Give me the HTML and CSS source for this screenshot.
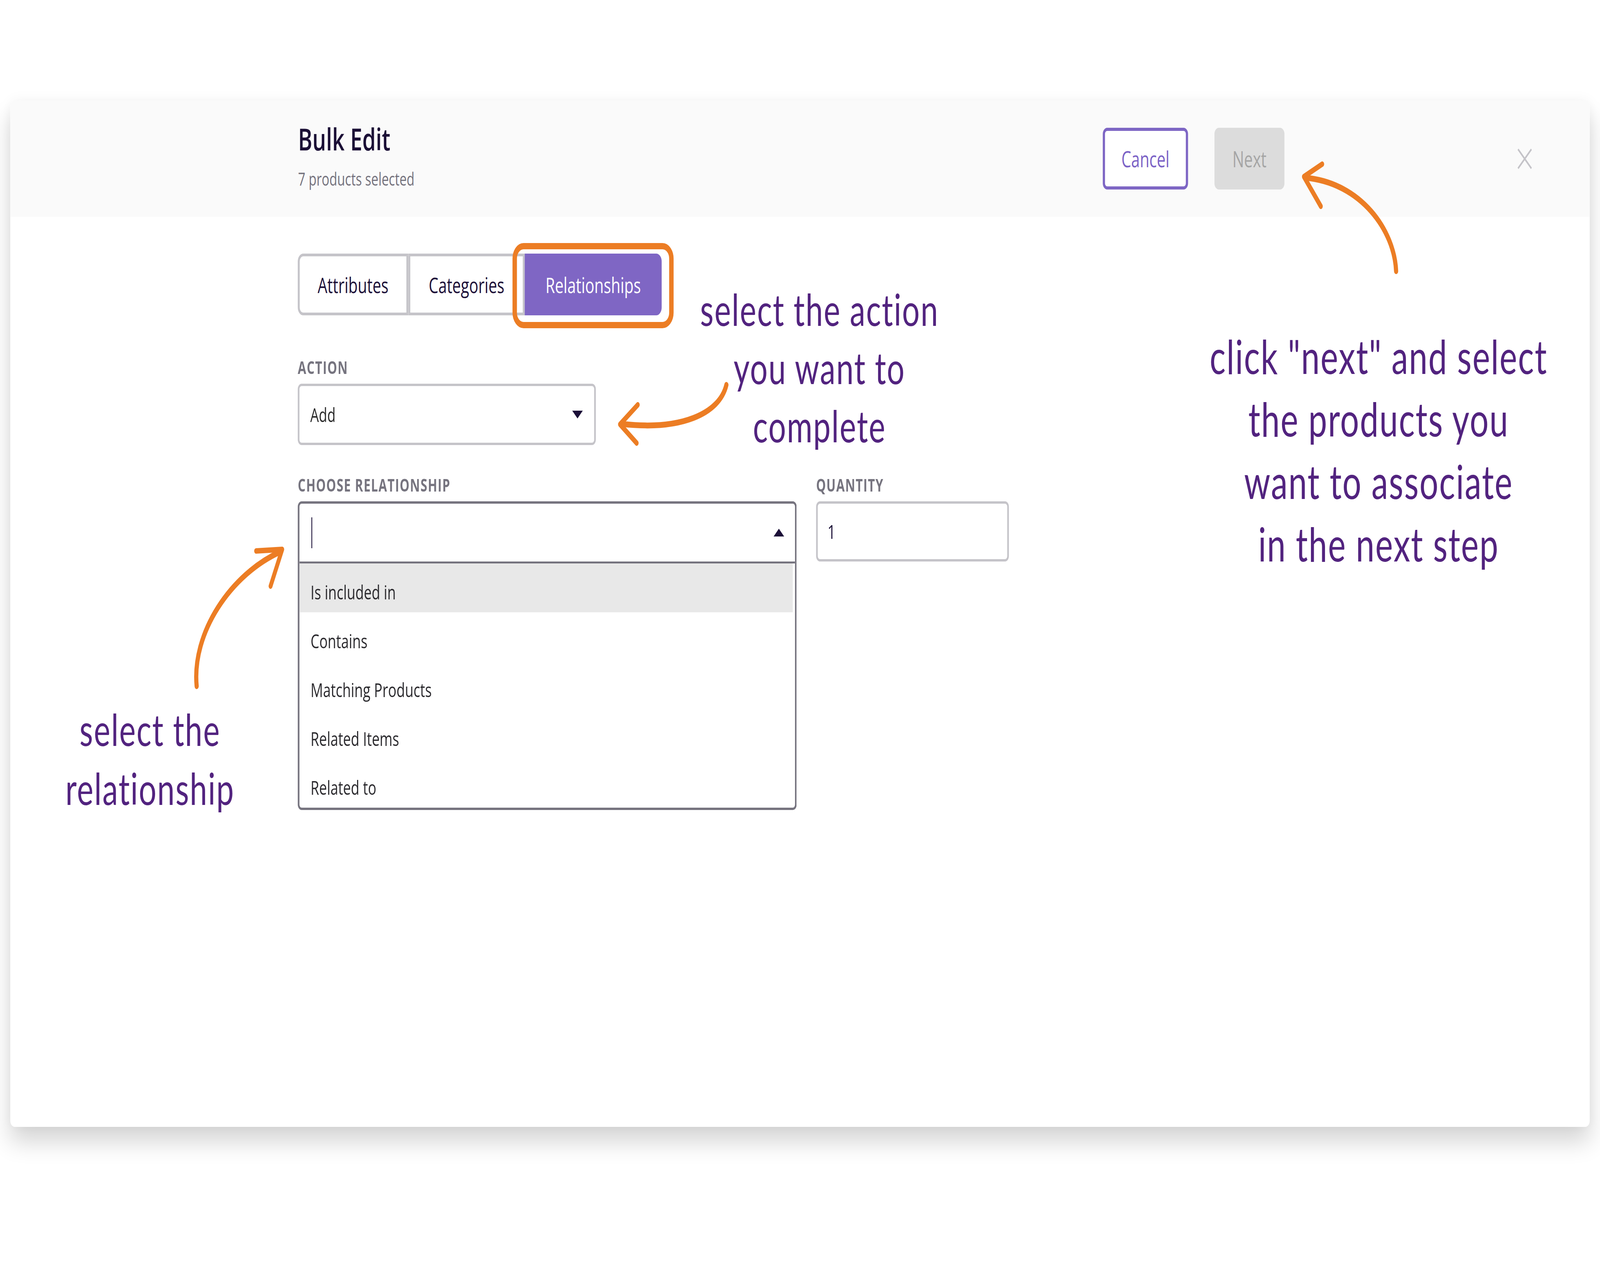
FILE: index.html
```html
<!doctype html>
<html>
    <head>
        <title>Bulk Edit</title>
        <link rel="stylesheet" href="styles.css">
    </head>
    <body>
        <div class="stage">
            <div class="page">
                <div class="card">
                    <div class="card-header">
                        <div class="heading">
                            <h1 class="title">Bulk Edit</h1>
                            <div class="subtitle">7 products selected</div>
                        </div>
                        <div class="actions">
                            <button class="btn btn-outline">Cancel</button>
                            <button class="btn btn-disabled">Next</button>
                        </div>
                        <button class="close" aria-label="Close">
                            <svg width="54" height="55" viewBox="0 0 54 55">
                                <path d="M3 3 L51 52 M51 3 L3 52" stroke="#c4c3c8" stroke-width="5" fill="none"/>
                            </svg>
                        </button>
                    </div>

                    <div class="card-body">
                        <div class="tabs">
                            <div class="tab">Attributes</div>
                            <div class="tab">Categories</div>
                            <div class="tab active">Relationships</div>
                        </div>

                        <div class="field field-action">
                            <div class="label">Action</div>
                            <div class="select">
                                <span>Add</span>
                                <span class="caret-down"></span>
                            </div>
                        </div>

                        <div class="field-row">
                            <div class="field field-relationship">
                                <div class="label">Choose Relationship</div>
                                <div class="combo">
                                    <div class="combo-input">
                                        <span class="cursor"></span>
                                        <span class="caret-up"></span>
                                    </div>
                                    <ul class="options">
                                        <li class="option hover">Is included in</li>
                                        <li class="option">Contains</li>
                                        <li class="option">Matching Products</li>
                                        <li class="option">Related Items</li>
                                        <li class="option">Related to</li>
                                    </ul>
                                </div>
                            </div>
                            <div class="field field-quantity">
                                <div class="label">Quantity</div>
                                <div class="input">1</div>
                            </div>
                        </div>
                    </div>
                </div>

                <!-- annotations -->
                <div class="note note-action">select the action<br>you want to<br>complete</div>
                <div class="note note-next">click "next" and select<br>the products you<br>want to associate<br>in the next step</div>
                <div class="note note-relationship">select the<br>relationship</div>

                <svg class="arrows" width="5760" height="3240" viewBox="0 0 5760 3240">
                    <g fill="none" stroke="#ec7d24" stroke-linecap="round" stroke-linejoin="round">
                        <path d="M5026 694 C5020 590 4900 468 4700 455" stroke-width="15"/>
                        <path d="M4760 420 L4694 452 L4755 528" stroke-width="14"/>

                        <path d="M2615 985 C2590 1060 2450 1102 2240 1085" stroke-width="15"/>
                        <path d="M2296 1036 L2232 1086 L2292 1134" stroke-width="14"/>

                        <path d="M708 1756 C690 1620 830 1470 1010 1412" stroke-width="15"/>
                        <path d="M922 1410 L1016 1406 L974 1500" stroke-width="14"/>
                    </g>
                </svg>
            </div>
        </div>
        <script src="script.js"></script>
    </body>
</html>
```

FILE: styles.css
```css
html, body {
    overflow: hidden;
}

body {
    margin: 0;
    padding: 0;
    background-color: #ffffff;
    font-family: 'Open Sans', 'Noto Sans', Arial, sans-serif;
}

.stage {
    width: 100vw;
    height: 100vh;
    overflow: hidden;
}

.page {
    position: relative;
    width: 5760px;
    height: 3240px;
    padding: 257px 37px 0;
    box-sizing: border-box;
    transform-origin: 0 0;
}

/* Modal card */
.card {
    height: 2627px;
    background-color: #ffffff;
    border-radius: 16px;
    overflow: hidden;
    box-shadow: 0 40px 70px rgba(0, 0, 0, 0.16), 0 0 40px rgba(0, 0, 0, 0.05);
}

.card-header {
    display: flex;
    align-items: center;
    height: 298px;
    padding: 0 207px 0 1036px;
    box-sizing: border-box;
    background-color: #fafafa;
}

.heading {
    flex: 1;
    align-self: flex-start;
    padding-top: 51px;
}

.title {
    margin: 0;
    font-size: 78px;
    line-height: 94px;
    font-weight: 600;
    color: #1b0f36;
}

.subtitle {
    margin-top: 25px;
    font-size: 46px;
    line-height: 60px;
    color: #74727d;
}

.actions {
    display: flex;
    gap: 95px;
}

.btn {
    height: 158px;
    box-sizing: border-box;
    border-radius: 16px;
    font-family: inherit;
    font-size: 56px;
    padding: 0;
}

.btn-outline {
    width: 307px;
    border: 8px solid #7e66c4;
    background-color: #ffffff;
    color: #7b62c6;
}

.btn-disabled {
    width: 252px;
    border: none;
    background-color: #dcdcdc;
    color: #a5a5a5;
}

.close {
    margin-left: 838px;
    padding: 0;
    border: none;
    background: none;
    display: flex;
}

/* Body */
.card-body {
    padding: 94px 0 0 1035px;
}

.tabs {
    display: flex;
    height: 158px;
}

.tab {
    position: relative;
    display: flex;
    align-items: center;
    justify-content: center;
    box-sizing: border-box;
    border: 7px solid #c5c4c9;
    background-color: #ffffff;
    font-size: 55px;
    color: #1c1038;
}

.tab:nth-child(1) {
    width: 398px;
    border-radius: 20px 0 0 20px;
}

.tab:nth-child(2) {
    width: 419px;
}

.tab.active {
    width: 493px;
    border-color: #7f66c4;
    background-color: #7f66c4;
    color: #ffffff;
    border-radius: 0 20px 20px 0;
}

/* orange highlight drawn over the active tab */
.tab.active::after {
    content: "";
    position: absolute;
    left: -51px;
    right: -50px;
    top: -34px;
    bottom: -40px;
    border: 16px solid #ec7d24;
    border-radius: 40px;
}

.label {
    font-size: 44px;
    line-height: 54px;
    font-weight: 700;
    letter-spacing: 2px;
    text-transform: uppercase;
    color: #76747f;
    margin-bottom: 15px;
}

.field-action {
    margin-top: 106px;
}

.select {
    display: flex;
    align-items: center;
    justify-content: space-between;
    width: 1073px;
    height: 157px;
    box-sizing: border-box;
    padding: 0 41px 0 39px;
    border: 6px solid #c5c4c9;
    border-radius: 14px;
    font-size: 49px;
    color: #2a2a2a;
}

.caret-down {
    width: 0;
    height: 0;
    border-left: 19px solid transparent;
    border-right: 19px solid transparent;
    border-top: 20px solid #1c1038;
}

.field-row {
    display: flex;
    gap: 70px;
    margin-top: 75px;
}

.combo {
    width: 1796px;
    box-sizing: border-box;
    border: 6px solid #76747f;
    border-radius: 14px;
    overflow: hidden;
}

.combo-input {
    display: flex;
    align-items: center;
    justify-content: space-between;
    height: 148px;
    padding: 0 39px 0 43px;
    border-bottom: 5px solid #76747f;
}

.cursor {
    width: 3px;
    height: 79px;
    background-color: #1c1038;
}

.caret-up {
    width: 0;
    height: 0;
    border-left: 19px solid transparent;
    border-right: 19px solid transparent;
    border-bottom: 20px solid #1c1038;
}

.options {
    list-style: none;
    margin: 0;
    padding: 0;
}

.option {
    height: 125px;
    box-sizing: border-box;
    padding: 22px 0 0 40px;
    font-size: 50px;
    line-height: 103px;
    color: #2b2a2e;
    margin-right: 8px;
}

.option.hover {
    background-color: #e8e8e8;
}

.input {
    width: 694px;
    height: 154px;
    box-sizing: border-box;
    padding-left: 35px;
    border: 6px solid #c5c4c9;
    border-radius: 14px;
    font-size: 50px;
    line-height: 142px;
    color: #1c1038;
}

/* Annotations over the screenshot */
.note {
    position: absolute;
    text-align: center;
    font-family: 'Lato', 'DejaVu Sans', sans-serif;
    color: #52237f;
    letter-spacing: 3px;
}

.note-action {
    left: 2450px;
    top: 716px;
    width: 1000px;
    font-size: 112px;
    line-height: 149px;
}

.note-next {
    left: 4263px;
    top: 831px;
    width: 1400px;
    font-size: 120px;
    line-height: 160px;
}

.note-relationship {
    left: 140px;
    top: 1790px;
    width: 800px;
    font-size: 112px;
    line-height: 151px;
}

.arrows {
    position: absolute;
    left: 0;
    top: 0;
    pointer-events: none;
}
```

FILE: script.js
```js
// fit the 5760x3240 layout into the window we are given
function fitPage() {
    const page = document.querySelector('.page');
    const sx = window.innerWidth / 5760;
    const sy = window.innerHeight / 3240;
    page.style.transform = `scale(${sx}, ${sy})`;
}

fitPage();
window.addEventListener('resize', fitPage);
```
